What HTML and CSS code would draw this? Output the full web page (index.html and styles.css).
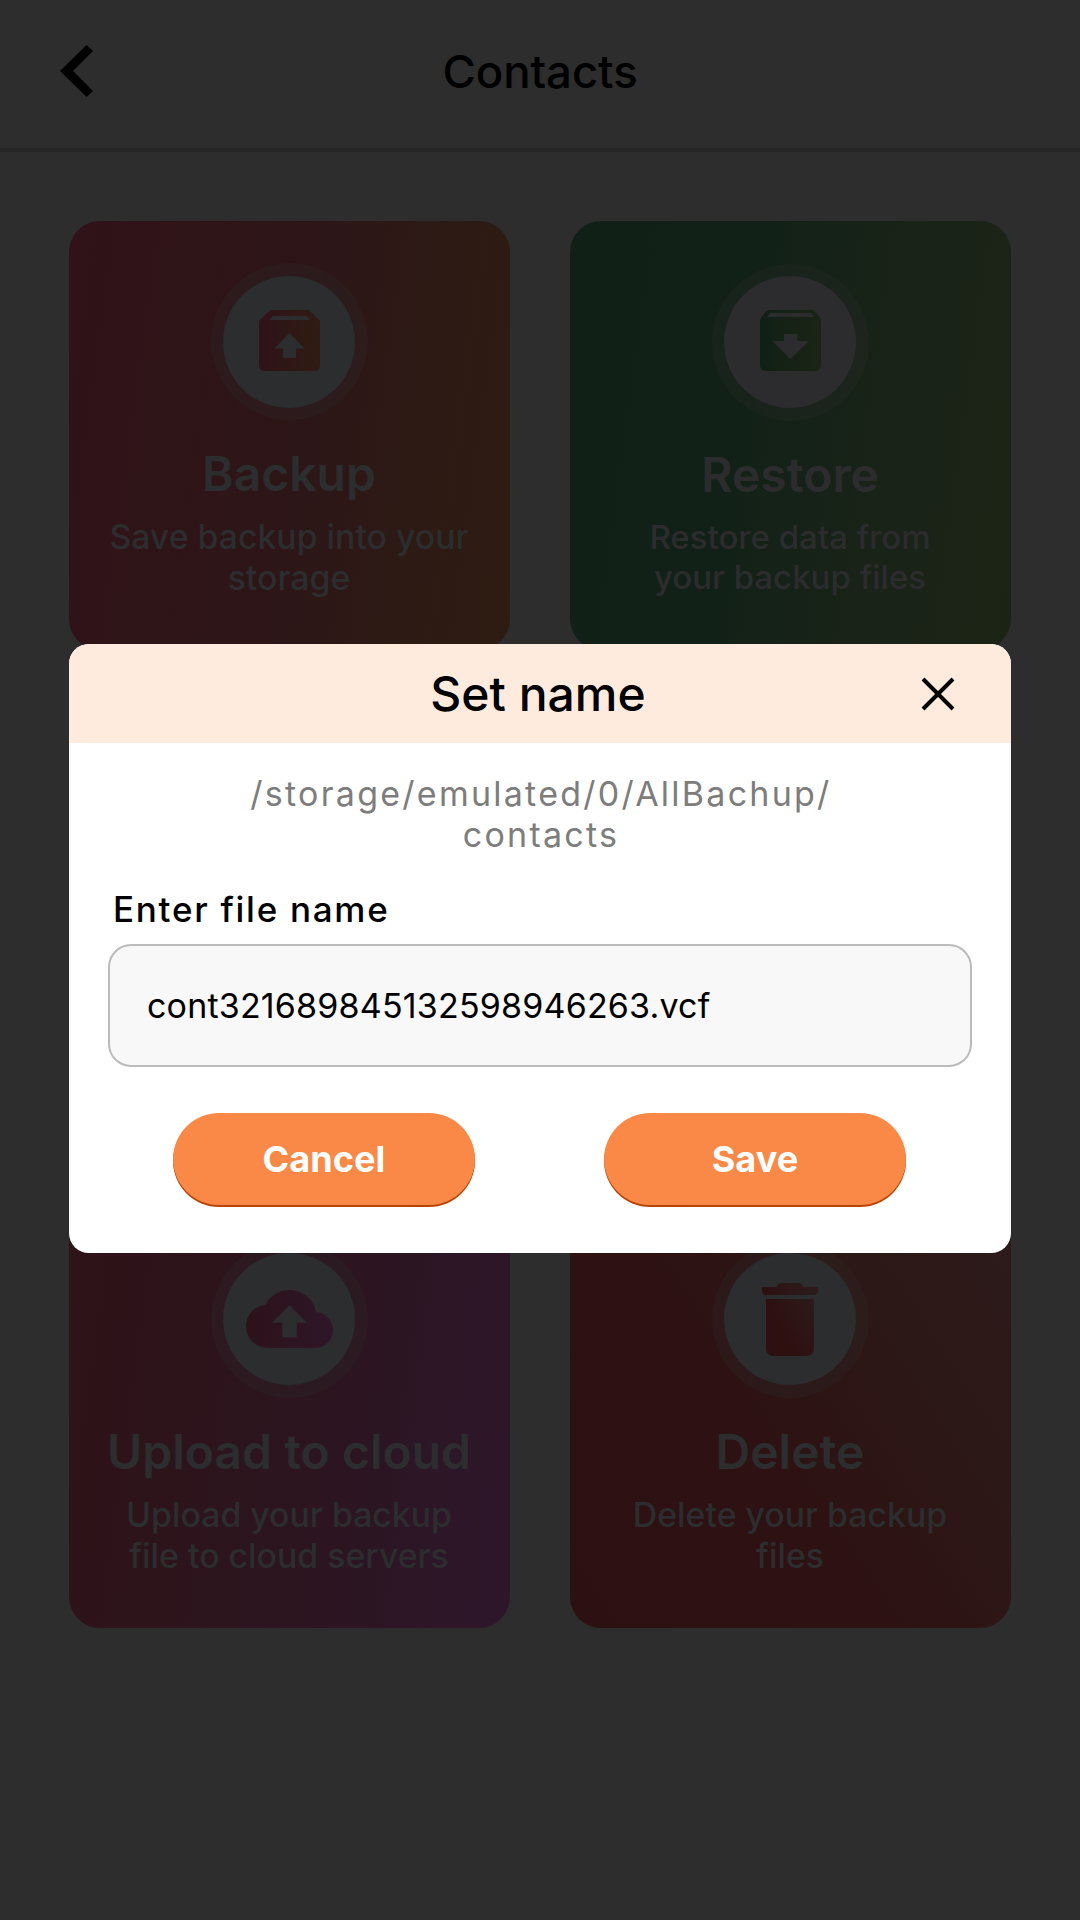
FILE: index.html
```html
<!DOCTYPE html>
<html lang="en">
<head>
<meta charset="utf-8">
<title>Contacts</title>
<link rel="stylesheet" href="styles.css">
</head>
<body>
<main class="screen">
  <header class="topbar">
    <svg class="back" viewBox="0 0 33 52"><path d="M26.5 0 33 6 13 26 33 46 26.5 52 0 26z"/></svg>
    <h1 class="topbar-title">Contacts</h1>
  </header>
  <section class="cards">
    <article class="card card-backup">
      <div class="ring"><div class="disc">
        <svg width="61" height="61" viewBox="0 0 61 61">
          <defs><linearGradient id="g-backup"><stop offset="0" stop-color="#301219"/><stop offset="1" stop-color="#2e1c12"/></linearGradient></defs>
          <path fill="url(#g-backup)" fill-rule="evenodd" d="M11 0H50L61 11V55Q61 61 55 61H6Q0 61 0 55V11ZM14 6 10.5 10H51L47 6ZM30.500 23 15.500 38.500H24V48H37V38.500H45.500Z"/>
        </svg>
      </div></div>
      <h2 class="card-title">Backup</h2>
      <p class="card-text">Save backup into your<br>storage</p>
    </article>
    <article class="card card-restore">
      <div class="ring"><div class="disc">
        <svg width="61" height="61" viewBox="0 0 61 61">
          <defs><linearGradient id="g-restore"><stop offset="0" stop-color="#102017"/><stop offset="1" stop-color="#1b2414"/></linearGradient></defs>
          <path fill="url(#g-restore)" fill-rule="evenodd" d="M9 0H52Q54 0 55.500 2L60 7.500Q61 9 61 11V55Q61 61 55 61H6Q0 61 0 55V11Q0 9 1 7.500L5.500 2Q7 0 9 0ZM10 3 7 7H54L51 3ZM24 24V31H12.300L30.500 49 49 31H37.300V24Z"/>
        </svg>
      </div></div>
      <h2 class="card-title">Restore</h2>
      <p class="card-text">Restore data from<br>your backup files</p>
    </article>
    <article class="card card-upload">
      <div class="ring"><div class="disc">
        <svg width="87" height="58" viewBox="0 4 24 16">
          <defs><linearGradient id="g-upload"><stop offset="0" stop-color="#2d1219"/><stop offset="1" stop-color="#2d1629"/></linearGradient></defs>
          <path fill="url(#g-upload)" d="M19.350 10.040C18.670 6.590 15.640 4 12 4 9.110 4 6.600 5.640 5.350 8.040 2.340 8.360 0 10.910 0 14c0 3.310 2.690 6 6 6h13c2.760 0 5-2.240 5-5 0-2.640-2.050-4.780-4.650-4.960zM14 13v4h-4v-4H7.200l4.800-4.800 4.800 4.800H14z"/>
        </svg>
      </div></div>
      <h2 class="card-title">Upload to cloud</h2>
      <p class="card-text">Upload your backup<br>file to cloud servers</p>
    </article>
    <article class="card card-delete">
      <div class="ring"><div class="disc">
        <svg width="56" height="73" viewBox="0 0 56 73">
          <defs><linearGradient id="g-delete" x1="0.200" y1="0.700" x2="0.900" y2="0.200"><stop offset="0.200" stop-color="#2e1011"/><stop offset="1" stop-color="#2d1a1a"/></linearGradient></defs>
          <path fill="url(#g-delete)" d="M19 0H37Q39 0 40 1.500L42 4H56V8Q56 12 52 12H4Q0 12 0 8V4H14L16 1.500Q17 0 19 0ZM4 16H52V65Q52 73 44 73H12Q4 73 4 65Z"/>
        </svg>
      </div></div>
      <h2 class="card-title">Delete</h2>
      <p class="card-text">Delete your backup<br>files</p>
    </article>
  </section>

  <section class="dialog" role="dialog" aria-label="Set name">
    <header class="dialog-head">
      <h2 class="dialog-title">Set name</h2>
      <svg class="close" viewBox="0 0 32 32"><path d="M1 1 31 31M31 1 1 31"/></svg>
    </header>
    <div class="dialog-body">
      <p class="path">/storage/emulated/0/AllBachup/<br>contacts</p>
      <label class="label" for="filename">Enter file name</label>
      <input class="field" id="filename" type="text" value="cont321689845132598946263.vcf" spellcheck="false">
      <div class="actions">
        <button class="btn" type="button">Cancel</button>
        <button class="btn" type="button">Save</button>
      </div>
    </div>
  </section>
</main>
</body>
</html>
```
FILE: styles.css
```css
* {
  box-sizing: border-box;
  margin: 0;
  padding: 0;
}

body {
  font-family: Inter, sans-serif;
  background: #2d2d2d;
  color: #000;
}

.screen {
  position: relative;
  width: 1080px;
  height: 1920px;
  overflow: hidden;
}

/* Top bar */
.topbar {
  display: grid;
  grid-template-columns: 33px 1fr 33px;
  align-items: center;
  height: 152px;
  padding: 0 60px 6px;
  border-bottom: 4px solid #262626;
}

.back {
  width: 33px;
  height: 52px;
}

.topbar-title {
  padding-top: 1px;
  font-size: 45.500px;
  font-weight: 500;
  line-height: 55px;
  letter-spacing: -0.050px;
  text-align: center;
}

/* Action cards */
.cards {
  display: grid;
  grid-template-columns: 441px 441px;
  grid-auto-rows: 429px;
  column-gap: 60px;
  row-gap: 549px;
  padding: 69px;
}

.card {
  display: flex;
  flex-direction: column;
  align-items: center;
  padding-top: 42px;
  border-radius: 31px;
  color: #2b2d2e;
  text-align: center;
}

.card-backup {
  background: linear-gradient(98deg, #301218 0%, #2d1617 55%, #2d1a14 78%, #2e1c12 100%);
}

.card-restore {
  padding-top: 43px;
  background: linear-gradient(98deg, #102017 0%, #122117 40%, #1a2318 72%, #1b2414 100%);
  color: #2c2c2e;
}

.card-upload {
  background: linear-gradient(98deg, #2e1317 0%, #2c1520 60%, #2d1628 88%, #2d1629 100%);
}

.card-delete {
  background: linear-gradient(57deg, #2d1011 0%, #2e1112 40%, #2c1816 72%, #2d1a1b 100%);
}

.ring {
  width: 157px;
  height: 157px;
  padding: 12px;
  border-radius: 50%;
  background: rgba(45, 45, 45, 0.250);
}

.card-backup .ring {
  padding-top: 12.500px;
}

.disc {
  display: flex;
  align-items: flex-start;
  width: 132px;
  height: 132px;
  padding: 34.500px 0 0 36px;
  border-radius: 50%;
  background: currentColor;
}

.card-restore .disc {
  padding-top: 34px;
}

.card-upload .disc {
  padding: 37px 0 0 23px;
}

.card-delete .disc {
  padding: 30px 0 0 38px;
}

.card-title {
  margin-top: 25px;
  padding-right: 1px;
  font-size: 48px;
  font-weight: 600;
  line-height: 58px;
}

.card-text {
  margin-top: 13px;
  padding-right: 1px;
  font-size: 33.800px;
  font-weight: 500;
  line-height: 41px;
}

.card-restore .card-text {
  font-size: 33px;
  line-height: 40px;
}

/* Dialog */
.dialog {
  position: absolute;
  top: 644px;
  left: 69px;
  width: 942px;
  height: 609px;
  border-radius: 20px;
  overflow: hidden;
  background: #fff;
}

.dialog-head {
  display: grid;
  grid-template-columns: 1fr 32px;
  align-items: center;
  height: 99px;
  padding: 0 57px 0 85px;
  background: #ffebde;
}

.dialog-title {
  font-size: 48px;
  font-weight: 500;
  line-height: 58px;
  text-align: center;
}

.close {
  width: 32px;
  height: 32px;
  overflow: visible;
  fill: none;
  stroke: #000;
  stroke-width: 4;
}

.dialog-body {
  padding: 30px 39px 0;
}

.path {
  padding-left: 2px;
  font-size: 34px;
  line-height: 41px;
  letter-spacing: 2.250px;
  color: #7d7d7d;
  text-align: center;
}

.label {
  display: block;
  margin: 33px 0 14px 5px;
  font-size: 35px;
  font-weight: 500;
  line-height: 42px;
  letter-spacing: 1.720px;
}

.field {
  display: block;
  width: 864px;
  height: 123px;
  padding: 0 37px;
  border: 2px solid #bbb;
  border-radius: 23px;
  background: #f8f8f8;
  color: #000;
  font: 400 34px Inter, sans-serif;
  letter-spacing: 0.180px;
  outline: none;
}

.actions {
  display: flex;
  gap: 129px;
  margin-top: 46px;
  padding-left: 65px;
}

.btn {
  width: 302px;
  height: 92px;
  border: 0;
  border-radius: 46px;
  background: #fa8947;
  box-shadow: 0 2px #b94300;
  color: #fff;
  font: 700 36px Inter, sans-serif;
  letter-spacing: 0.100px;
}
```
